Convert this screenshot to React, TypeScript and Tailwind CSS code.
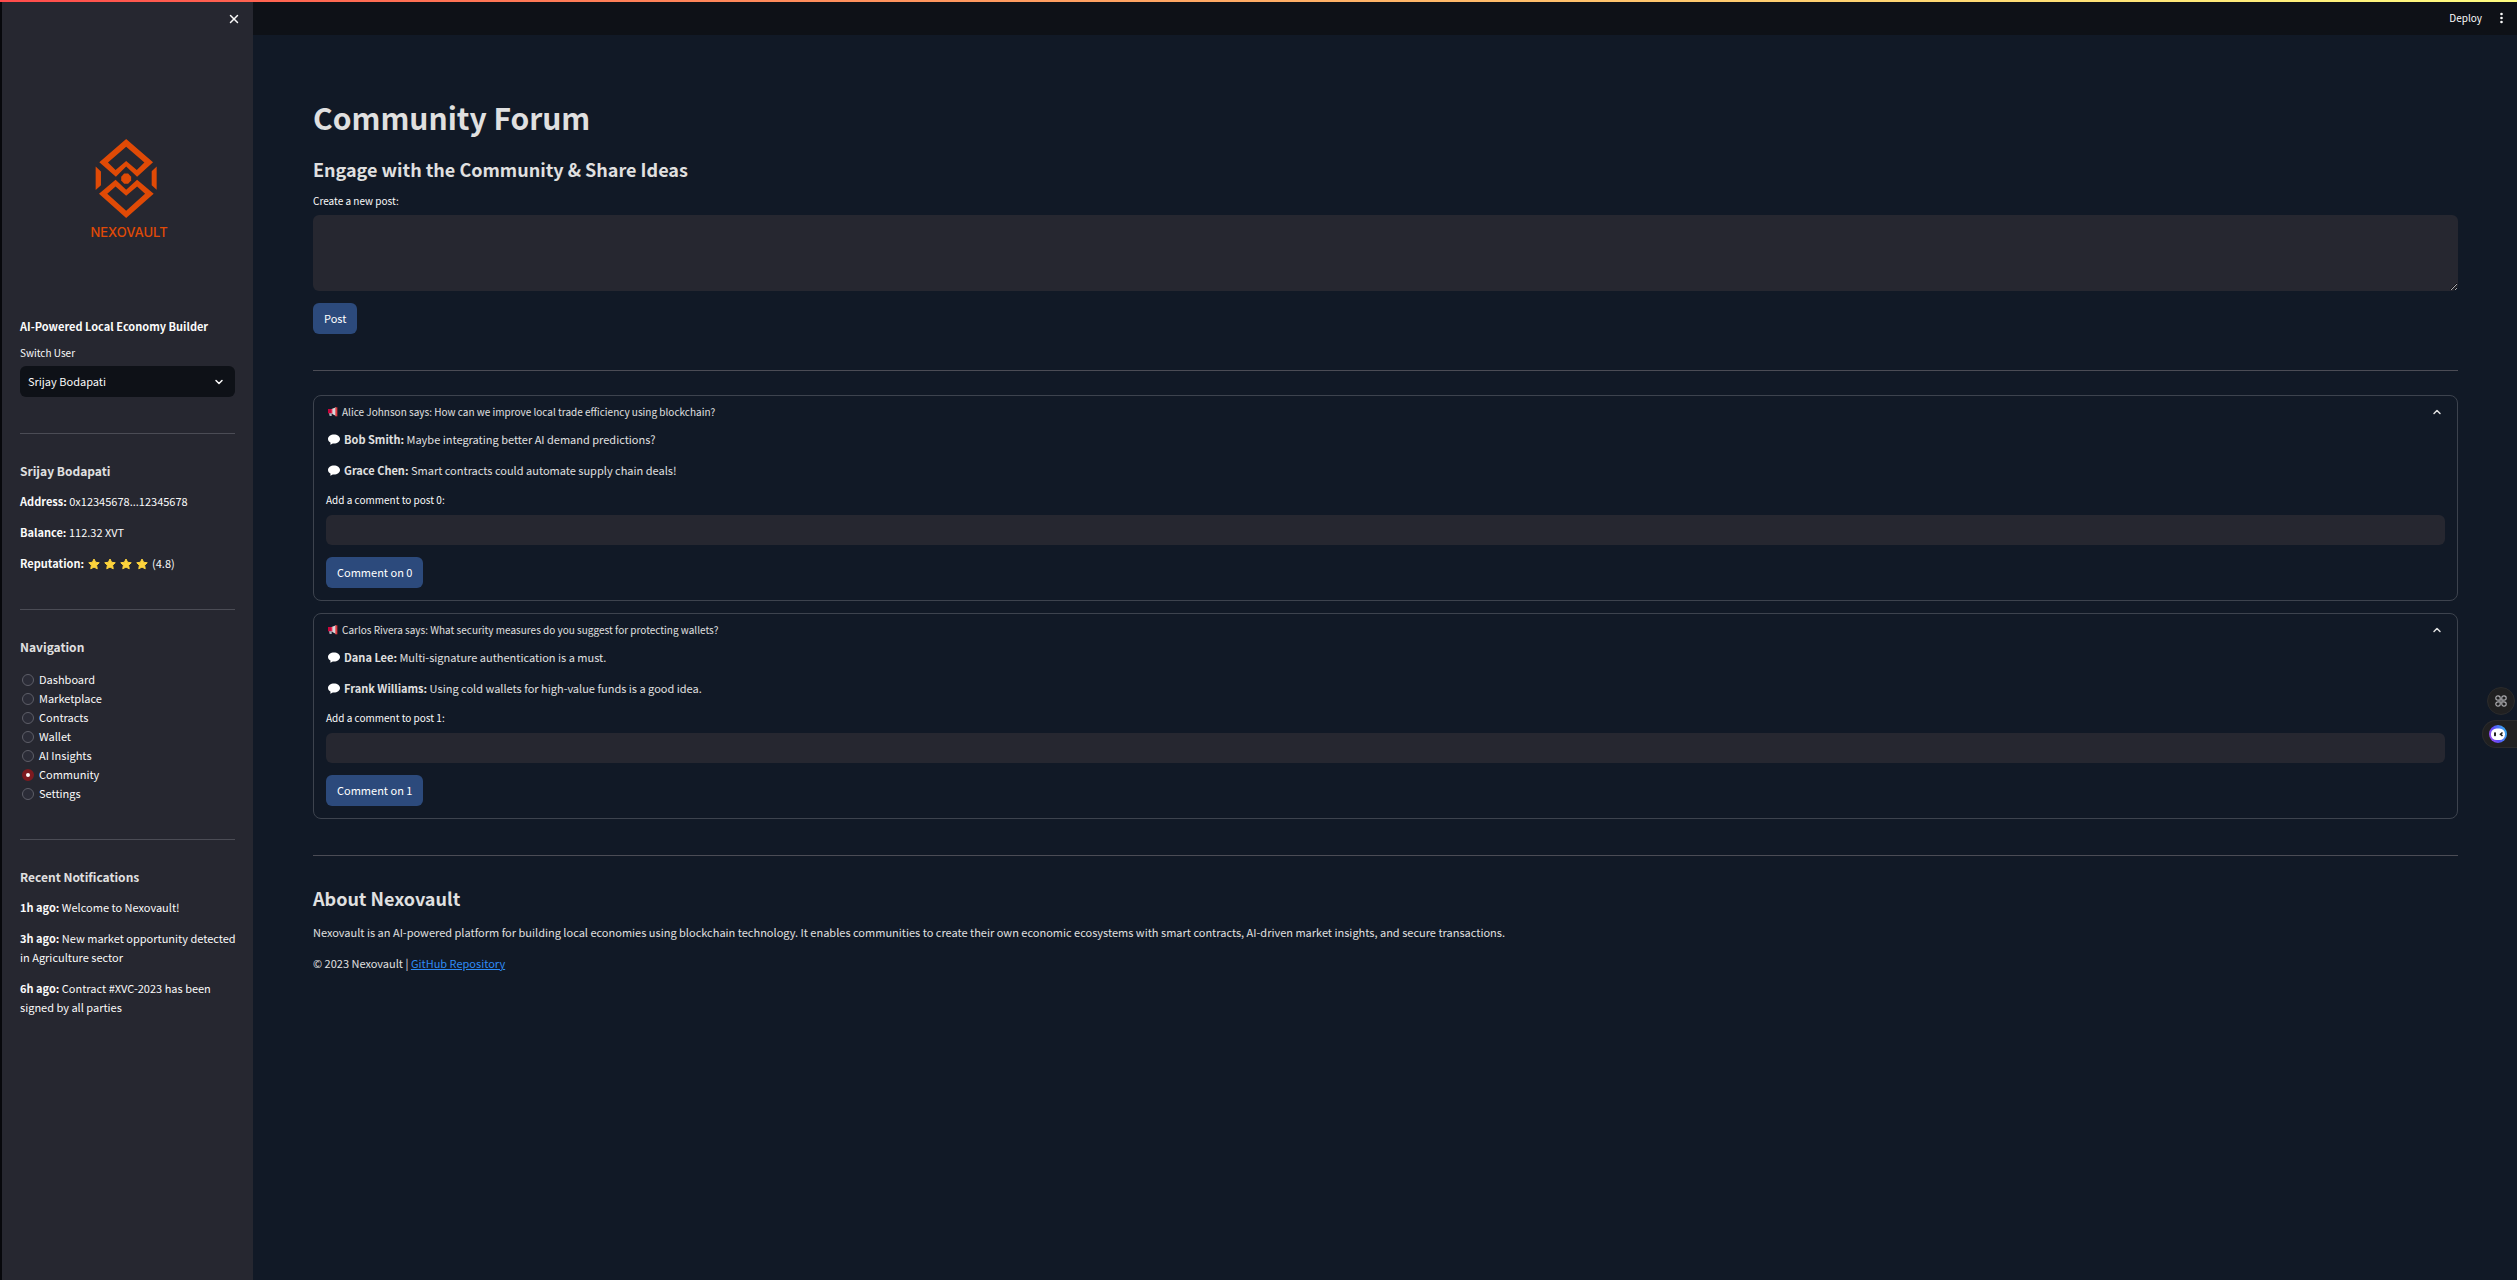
import { ReactNode, useState } from 'react';
import { ChevronDown, ChevronUp, X } from 'lucide-react';

interface Comment {
  author: string;
  text: string;
}

interface Post {
  id: number;
  author: string;
  text: string;
  comments: Comment[];
}

const posts: Post[] = [
  {
    id: 0,
    author: 'Alice Johnson',
    text: 'How can we improve local trade efficiency using blockchain?',
    comments: [
      { author: 'Bob Smith', text: 'Maybe integrating better AI demand predictions?' },
      { author: 'Grace Chen', text: 'Smart contracts could automate supply chain deals!' },
    ],
  },
  {
    id: 1,
    author: 'Carlos Rivera',
    text: 'What security measures do you suggest for protecting wallets?',
    comments: [
      { author: 'Dana Lee', text: 'Multi-signature authentication is a must.' },
      { author: 'Frank Williams', text: 'Using cold wallets for high-value funds is a good idea.' },
    ],
  },
];

const pages = ['Dashboard', 'Marketplace', 'Contracts', 'Wallet', 'AI Insights', 'Community', 'Settings'];

const notifications = [
  { time: '1h ago', text: 'Welcome to Nexovault!' },
  { time: '3h ago', text: 'New market opportunity detected in Agriculture sector' },
  { time: '6h ago', text: 'Contract #XVC-2023 has been signed by all parties' },
];

function Logo() {
  return (
    <div className="flex flex-col items-center text-[#e04a06]">
      <svg viewBox="285 417 187 238" className="h-[79px] w-[62px]" fill="currentColor" fillRule="evenodd" aria-hidden="true">
        <path d="M379 417 460 487 412 531 379 500 348 531 298 487Z M379 440 324 488 347 510 379 483 411 510 434 488Z" />
        <path d="M347 540 379 570 412 540 462 582 379 655 297 582Z M347 560 322 582 379 633 436 582 412 560 379 588Z" />
        <path d="M287 500 303 515V556L287 571Z M471 500 456 514V556L471 570Z" />
        <path d="M373 521h12l9 10v11l-9 10h-12l-9-10v-11Z" />
      </svg>
      <p className="mt-1.5 pl-1.5 font-[Inter,sans-serif] text-[13px] leading-4 font-medium">NEXOVAULT</p>
    </div>
  );
}

function Star() {
  return (
    <svg viewBox="0 0 24 24" className="h-3 w-3" fill="#fdd33c" stroke="#fdd33c" strokeWidth="2" strokeLinejoin="round" aria-hidden="true">
      <path d="M12 2 15.200 8.500 22.500 9.500 17.200 14.500 18.500 21.500 12 18.200 5.500 21.500 6.800 14.500 1.500 9.500 8.800 8.500Z" />
    </svg>
  );
}

function Megaphone() {
  return (
    <svg viewBox="0 0 30 30" className="h-[10px] w-[10px] shrink-0" aria-hidden="true">
      <path d="M0 6h9v13H0Z" fill="#c8063c" />
      <path d="M9 7 24 1v26L9 19Z" fill="#d8d8dc" />
      <path d="M9 7 13 5v16l-4-2Z" fill="#e2264d" />
      <path d="M3 19h8v8H5Z" fill="#aeb2bb" />
      <path d="M22 1h6v27h-6Z" fill="#e03b40" />
    </svg>
  );
}

function Bubble() {
  return (
    <svg viewBox="0 0 36 32" className="h-[11px] w-3 shrink-0" fill="#fff" aria-hidden="true">
      <path d="M18 1C8 1 0 7 0 14.500c0 5 3.500 9 8 11.500-.3 2-1.200 3.700-2.500 5.200 3.500-.4 6.500-1.700 8.700-3.500 1.300.2 2.500.3 3.800.3 10 0 18-6 18-13.500S28 1 18 1Z" />
    </svg>
  );
}

function Divider() {
  return <hr className="border-t border-[#4b4c55]" />;
}

function SideHeading({ children }: { children: ReactNode }) {
  return <h3 className="text-[12px] leading-6 font-semibold text-[#e0e0e0]">{children}</h3>;
}

function Sidebar() {
  const [page, setPage] = useState('Community');

  return (
    <aside className="w-[253px] shrink-0 border-l-2 border-[#07080c] bg-[#262730] pr-[18px] pb-10 pl-[18px] text-[#fafafa]">
      <div className="flex h-[38px] items-center justify-end">
        <button type="button" aria-label="Close sidebar" className="-mr-1.5">
          <X size={14} strokeWidth={2.5} />
        </button>
      </div>

      <div className="mt-[101px] pr-[3px]">
        <Logo />
      </div>

      <p className="mt-[77px] font-bold">AI-Powered Local Economy Builder</p>

      <label htmlFor="user" className="mt-[9px] block text-[10px] leading-4">Switch User</label>
      <div className="relative mt-[5px]">
        <select id="user" className="h-[31px] w-full appearance-none rounded-md bg-[#0e1117] px-2">
          <option>Srijay Bodapati</option>
        </select>
        <ChevronDown size={12} strokeWidth={3} className="pointer-events-none absolute top-2.5 right-2.5" />
      </div>

      <div className="mt-9">
        <Divider />
      </div>
      <section className="mt-[25px]">
        <SideHeading>Srijay Bodapati</SideHeading>
        <div className="mt-[9px] flex flex-col gap-3">
          <p><b>Address:</b> 0x12345678...12345678</p>
          <p><b>Balance:</b> 112.32 XVT</p>
          <p className="flex items-center">
            <b>Reputation:</b>
            <span className="mx-1 flex gap-1">
              <Star />
              <Star />
              <Star />
              <Star />
            </span>
            (4.8)
          </p>
        </div>
      </section>

      <div className="mt-9">
        <Divider />
      </div>
      <nav className="mt-[25px]">
        <SideHeading>Navigation</SideHeading>
        <div className="mt-[11px]">
          {pages.map((name) => (
            <label key={name} className="flex items-center gap-[5px] pl-0.5">
              <input
                type="radio"
                name="page"
                checked={page === name}
                onChange={() => setPage(name)}
                className="h-3 w-3 appearance-none rounded-full border border-[#5d5e68] bg-[#2b2c37] checked:border-4 checked:border-[#7d1a1f] checked:bg-white"
              />
              {name}
            </label>
          ))}
        </div>
      </nav>

      <div className="mt-9">
        <Divider />
      </div>
      <section className="mt-[25px]">
        <SideHeading>Recent Notifications</SideHeading>
        <div className="-mr-2 mt-[9px] flex flex-col gap-3">
          {notifications.map((n) => (
            <p key={n.time}><b>{n.time}:</b> {n.text}</p>
          ))}
        </div>
      </section>
    </aside>
  );
}

function ActionButton({ children }: { children: ReactNode }) {
  return (
    <button type="button" className="block h-[31px] rounded-md bg-[#2c4a7c] px-[11px] text-white">
      {children}
    </button>
  );
}

function PostCard({ post }: { post: Post }) {
  const fieldId = `comment-${post.id}`;

  return (
    <details open className="rounded-lg border border-[#3d434e]">
      <summary className="flex list-none items-center gap-1 px-3.5 pt-2 text-[10px] leading-4">
        <Megaphone />
        <span className="flex-1">{post.author} says: {post.text}</span>
        <ChevronUp size={12} strokeWidth={3} />
      </summary>
      <div className="px-3 pt-2.5 pb-3">
        <div className="flex flex-col gap-3">
          {post.comments.map((c) => (
            <p key={c.author} className="flex items-center gap-1 pl-0.5">
              <Bubble />
              <span><b>{c.author}:</b> {c.text}</span>
            </p>
          ))}
        </div>
        <label htmlFor={fieldId} className="mt-3 block text-[10px] leading-4 text-[#fafafa]">
          Add a comment to post {post.id}:
        </label>
        <input id={fieldId} type="text" className="mt-[7px] mb-3 block h-[30px] w-full rounded-md bg-[#262730] px-2" />
        <ActionButton>Comment on {post.id}</ActionButton>
      </div>
    </details>
  );
}

function FloatingTools() {
  return (
    <div className="fixed top-[687px] right-0 flex flex-col items-end gap-[5px]">
      <button type="button" aria-label="Tools" className="mr-0.5 flex h-7 w-7 items-center justify-center rounded-full border border-[#2b2b2c] bg-[#202021]">
        <svg viewBox="0 0 12 12" className="h-3 w-3" fill="none" stroke="#a9a9ad" strokeWidth="1.2" aria-hidden="true">
          <path d="M5.200 5.200H3A2.200 2.200 0 1 1 5.200 3ZM6.800 5.200V3A2.200 2.200 0 1 1 9 5.200ZM5.200 6.800V9A2.200 2.200 0 1 1 3 6.800ZM6.800 6.800H9A2.200 2.200 0 1 1 6.800 9Z" />
        </svg>
      </button>
      <button type="button" aria-label="Assistant" className="flex h-7 w-[35px] items-center rounded-l-full border border-r-0 border-[#2b2b2c] bg-[#202021] pl-1.5">
        <svg viewBox="0 0 18 18" className="h-[18px] w-[18px]" aria-hidden="true">
          <defs>
            <linearGradient id="ring" x1="0" y1="1" x2="1" y2="0.6">
              <stop offset="0" stopColor="#b04df0" />
              <stop offset="0.5" stopColor="#5b4df5" />
              <stop offset="1" stopColor="#3aa0f0" />
            </linearGradient>
          </defs>
          <circle cx="9" cy="9" r="9" fill="url(#ring)" />
          <rect x="2" y="3.500" width="14" height="11.500" rx="5.500" fill="#fff" />
          <rect x="5" y="7.200" width="2" height="4" rx="0.800" fill="#222" />
          <path d="M13.500 7.500 11.500 9.200 13.500 11" fill="none" stroke="#222" strokeWidth="1.600" />
        </svg>
      </button>
    </div>
  );
}

export default function App() {
  return (
    <div className="flex min-h-screen bg-[#111926] font-['Noto_Sans_CJK_SC',sans-serif] text-[11px] leading-[19px]">
      <div className="fixed inset-x-0 top-0 z-10 h-0.5 bg-linear-to-r from-[#ff4b4b] to-[#fffd80]" />
      <Sidebar />

      <div className="min-w-0 flex-1 text-[#e0e0e0]">
        <header className="flex h-[35px] items-center justify-end gap-4 bg-[#0e1117] pr-3 text-[#fafafa]">
          <button type="button" className="text-[10px] leading-4">Deploy</button>
          <button type="button" aria-label="Main menu">
            <svg viewBox="0 0 7 12" className="h-3 w-[7px]" fill="currentColor" aria-hidden="true">
              <circle cx="3.500" cy="2" r="1.300" />
              <circle cx="3.500" cy="6" r="1.300" />
              <circle cx="3.500" cy="10" r="1.300" />
            </svg>
          </button>
        </header>

        <main className="pt-[61px] pr-[59px] pb-10 pl-[60px]">
          <h1 className="text-[30px] leading-[42px] font-bold">Community Forum</h1>
          <h2 className="mt-4 text-[18px] leading-[30px] font-semibold">Engage with the Community &amp; Share Ideas</h2>

          <label htmlFor="post" className="mt-[9px] block text-[10px] leading-4 text-[#fafafa]">Create a new post:</label>
          <textarea id="post" className="mt-1.5 mb-3 block h-[76px] w-full resize-y rounded-md bg-[#262730] p-2" />
          <ActionButton>Post</ActionButton>

          <div className="mt-9 mb-6">
            <Divider />
          </div>

          <div className="flex flex-col gap-3">
            {posts.map((post) => (
              <PostCard key={post.id} post={post} />
            ))}
          </div>

          <div className="mt-9 mb-[27px]">
            <Divider />
          </div>

          <footer>
            <h2 className="text-[18px] leading-[30px] font-semibold">About Nexovault</h2>
            <p className="mt-2.5">
              Nexovault is an AI-powered platform for building local economies using blockchain technology. It enables
              communities to create their own economic ecosystems with smart contracts, AI-driven market insights, and
              secure transactions.
            </p>
            <p className="mt-3">
              © 2023 Nexovault | <a href="#" className="text-[#2f8bf5] underline">GitHub Repository</a>
            </p>
          </footer>
        </main>
      </div>

      <FloatingTools />
    </div>
  );
}
